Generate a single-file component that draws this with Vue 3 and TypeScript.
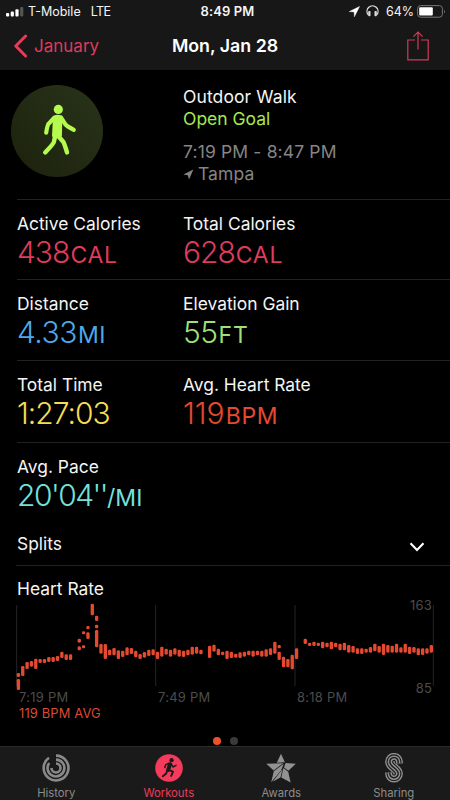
<template>
  <div class="screen">
    <header class="top">
      <div class="status-bar">
        <div class="status-left">
          <svg class="signal" width="18" height="10" viewBox="0 0 18 10">
            <rect x="0" y="6" width="3.2" height="3.6" rx="1" fill="#fff" />
            <rect x="4.7" y="4.4" width="3.2" height="5.2" rx="1" fill="#fff" />
            <rect x="9.4" y="2.3" width="3.2" height="7.3" rx="1" fill="#fff" />
            <rect x="14.1" y="0" width="3.2" height="9.6" rx="1" fill="#555" />
          </svg>
          <span class="carrier">T-Mobile</span>
          <span class="network">LTE</span>
        </div>
        <div class="clock">8:49 PM</div>
        <div class="status-right">
          <svg class="location" width="11" height="11" viewBox="0 0 11 11">
            <path d="M10.6 0.4 L0.2 5.6 L5.1 5.9 L5.4 10.8 Z" fill="#fff" stroke="#fff" stroke-width="0.4" />
          </svg>
          <svg class="headphones" width="13" height="12" viewBox="0 0 13 12">
            <path d="M2.2 9.8 A5.5 5.5 0 1 1 10.8 9.8" fill="none" stroke="#ddd" stroke-width="1.3" />
            <rect x="2.2" y="6" width="2.3" height="5.2" rx="0.8" fill="#ddd" />
            <rect x="8.5" y="6" width="2.3" height="5.2" rx="0.8" fill="#ddd" />
          </svg>
          <span class="percent">64%</span>
          <svg width="29" height="13" viewBox="0 0 29 13">
            <rect x="0.6" y="0.6" width="24.8" height="11.6" rx="3" fill="none" stroke="#777" stroke-width="1" />
            <rect x="2.2" y="2.2" width="13.6" height="8.4" rx="1" fill="#fff" />
            <path d="M27 4.4 Q28.6 6.4 27 8.4 Z" fill="#777" />
          </svg>
        </div>
      </div>
      <nav class="nav-bar">
        <button class="back">
          <svg width="14" height="24" viewBox="0 0 14 24">
            <path d="M11.6 2 L1.8 12 L11.6 22" fill="none" stroke="#e93a5b" stroke-width="3" stroke-linecap="round" stroke-linejoin="round" />
          </svg>
          <span>January</span>
        </button>
        <h1 class="title">Mon, Jan 28</h1>
        <button class="share">
          <svg width="22" height="30" viewBox="0 0 22 30">
            <path d="M8 9 H0.8 V28.8 H21.2 V9 H14 M11 18.5 V1.2 M6.4 5.6 L11 1 L15.6 5.6" fill="none" stroke="#d33a58" stroke-width="1.2" />
          </svg>
        </button>
      </nav>
    </header>

    <main class="content">
      <section class="summary">
        <div class="badge-cell">
          <svg width="92" height="92" viewBox="0 0 92 92">
            <defs>
              <linearGradient id="badge" x1="0" y1="1" x2="1" y2="0">
                <stop offset="0" stop-color="#1c220c" />
                <stop offset="1" stop-color="#29331a" />
              </linearGradient>
            </defs>
            <circle cx="46" cy="46" r="46" fill="url(#badge)" />
            <g fill="none" stroke="#b4fb4d" stroke-linecap="round" stroke-linejoin="round">
              <circle cx="47.3" cy="24.4" r="4.6" fill="#b4fb4d" stroke="none" />
              <path d="M43 31.6 Q46.5 30 50.4 31.6 L49.9 50.5 Q46.5 53.5 42 51 Z" fill="#b4fb4d" stroke-width="2" />
              <path d="M43 33 L37.8 38.6 Q36.4 40 35.2 47.6" stroke-width="4.2" />
              <path d="M50.2 32.8 L54.4 39.4 Q56 41.4 62.8 44.8" stroke-width="4.2" />
              <path d="M44.2 51 L42.8 57.2 Q42 59.2 34.2 67.4" stroke-width="4.4" />
              <path d="M47.2 51 L52.4 57 Q53.4 58.6 56 67.4" stroke-width="4.4" />
            </g>
          </svg>
        </div>
        <div class="info">
          <div class="line kind">Outdoor Walk</div>
          <div class="line goal">Open Goal</div>
          <div class="line time">7:19 PM - 8:47 PM</div>
          <div class="line place">
            <svg width="11" height="11" viewBox="0 0 11 11">
              <path d="M10.4 0.6 L0.4 5.4 L4.8 6.2 L6 10.6 Z" fill="#858585" />
            </svg>
            <span>Tampa</span>
          </div>
        </div>
      </section>

      <section v-for="(row, r) in rows" :key="r" class="metrics" :class="'row-' + r">
        <div v-for="m in row" :key="m.label" class="metric">
          <div class="label">{{ m.label }}</div>
          <div class="value" :class="m.tone">
            <span class="number">{{ m.value }}</span><span class="unit">{{ m.unit }}</span>
          </div>
        </div>
      </section>

      <section class="splits">
        <span class="label">Splits</span>
        <svg width="16" height="10" viewBox="0 0 16 10">
          <path d="M1.5 1.2 L8 7.9 L14.5 1.2" fill="none" stroke="#fff" stroke-width="2.1" />
        </svg>
      </section>

      <section class="heart">
        <div class="label">Heart Rate</div>
        <div class="chart">
          <svg width="418" height="90" viewBox="0 30 1254 270">
            <line v-for="x in grid" :key="x" :x1="x" :x2="x" y1="45" y2="288" stroke="#242424" stroke-width="3" />
            <rect
              v-for="(b, i) in bars"
              :key="i"
              :x="b.x - 5"
              :y="b.top"
              width="10"
              :height="b.bottom - b.top"
              rx="4"
              fill="#e5492f"
            />
          </svg>
          <div class="scale">
            <span>163</span>
            <span>85</span>
          </div>
        </div>
        <div class="times">
          <span>7:19 PM</span>
          <span>7:49 PM</span>
          <span>8:18 PM</span>
        </div>
        <div class="average">119 BPM AVG</div>
      </section>

      <div class="pager">
        <i class="dot active"></i>
        <i class="dot"></i>
      </div>
    </main>

    <footer class="tab-bar">
      <button class="tab">
        <svg width="30" height="30" viewBox="0 0 30 30" fill="none" stroke="#8a8a8a" stroke-width="2.6">
          <path d="M15 2.6 A12.4 12.4 0 1 1 8 4.8" />
          <path d="M15 6.6 A8.4 8.4 0 1 1 8.2 10" />
          <path d="M15 10.5 A4.5 4.5 0 1 1 10.5 15" />
        </svg>
        <span>History</span>
      </button>
      <button class="tab active">
        <svg width="30" height="30" viewBox="0 0 30 30">
          <circle cx="15" cy="15" r="13.8" fill="#f43b5c" />
          <circle cx="17.6" cy="7.2" r="2.1" fill="#1a1a1a" />
          <g fill="none" stroke="#1a1a1a" stroke-linecap="round" stroke-linejoin="round">
            <path d="M16 11.2 L14.2 17" stroke-width="4" />
            <path d="M14.8 10.4 L11.8 11.6 L10.8 14.6" stroke-width="1.5" />
            <path d="M17.6 11.4 L19 14 L22 12.4" stroke-width="1.5" />
            <path d="M15 17.2 L19 18.6 L17.2 22.8" stroke-width="1.9" />
            <path d="M13.2 17.6 L12.2 20.4 L8.8 23.2" stroke-width="1.9" />
          </g>
        </svg>
        <span>Workouts</span>
      </button>
      <button class="tab">
        <svg width="30" height="30" viewBox="0 0 30 30" fill="#929292">
          <path d="M15 0.8 L18.8 9.2 L10.8 9.8 Z" />
          <path d="M0.3 10.8 L17.2 10.2 L7.6 17.4 Z" />
          <path d="M19.6 10 L29.8 10.8 L22.4 17.8 L18 14.6 Z" />
          <path d="M17.8 10.8 L15 17.6 L5.2 29.2 L7.8 18.2 Z" />
          <path d="M16.6 16 L14.4 24.6 L6.6 28.8 Z" />
          <path d="M17.4 15 L22.2 18.8 L24.6 29.4 L15.3 24.6 Z" />
        </svg>
        <span>Awards</span>
      </button>
      <button class="tab">
        <svg width="30" height="30" viewBox="0 0 30 30" fill="none">
          <path :d="sCurve" stroke="#8f8f8f" stroke-width="9.4" />
          <path :d="sCurve" stroke="#1a1a1a" stroke-width="6.6" />
          <path :d="sCurve" stroke="#8f8f8f" stroke-width="4.4" />
          <path :d="sCurve" stroke="#1a1a1a" stroke-width="1.4" />
        </svg>
        <span>Sharing</span>
      </button>
    </footer>
  </div>
</template>

<script setup lang="ts">
interface Metric {
  label: string
  value: string
  unit: string
  tone: string
}

interface Bar {
  x: number
  top: number
  bottom: number
}

const rows: Metric[][] = [
  [
    { label: 'Active Calories', value: '438', unit: 'CAL', tone: 'red' },
    { label: 'Total Calories', value: '628', unit: 'CAL', tone: 'red' }
  ],
  [
    { label: 'Distance', value: '4.33', unit: 'MI', tone: 'blue' },
    { label: 'Elevation Gain', value: '55', unit: 'FT', tone: 'green' }
  ],
  [
    { label: 'Total Time', value: '1:27:03', unit: '', tone: 'yellow' },
    { label: 'Avg. Heart Rate', value: '119', unit: 'BPM', tone: 'orange' }
  ],
  [{ label: 'Avg. Pace', value: "20'04''", unit: '/MI', tone: 'cyan' }]
]

const sCurve = 'M19.2 10.4 V8.8 A4.2 4.2 0 1 0 10.8 8.8 C10.8 14 19.2 15.6 19.2 20.6 A4.2 4.2 0 1 1 10.8 20.6 V19.4'

const grid = [2, 419, 837, 1252]

// one entry per time slot, pairs of top/bottom; an empty slot has no reading
const samples: number[][] = [
  [249, 261, 267, 300], [228, 258], [216, 237], [213, 230], [206, 237], [207, 219], [207, 219], [201, 216],
  [201, 216], [198, 213], [185, 204], [193, 210], [193, 210], [], [146, 158, 169, 181], [124, 133, 166, 175],
  [108, 118, 127, 147], [41, 76], [77, 93, 104, 115, 120, 172], [162, 191], [162, 207], [179, 196], [174, 196], [181, 207],
  [182, 201], [172, 196], [174, 192], [182, 202], [192, 207], [186, 203], [179, 198], [178, 196],
  [185, 207], [170, 200], [176, 194], [179, 200], [175, 194], [179, 200], [182, 201], [179, 196],
  [170, 194], [170, 191], [179, 193], [], [167, 204], [164, 185], [176, 196], [185, 195],
  [182, 207], [185, 204], [191, 203], [187, 204], [185, 200], [182, 196], [182, 200], [182, 196],
  [182, 200], [178, 200], [175, 195], [155, 191], [165, 175, 185, 210], [200, 232], [207, 232], [194, 238],
  [175, 207], [], [146, 162], [158, 168], [155, 168], [158, 168], [155, 175], [158, 172],
  [155, 178], [158, 172], [161, 181], [158, 181], [165, 188], [168, 188], [175, 192], [175, 192],
  [176, 188], [171, 188], [161, 184], [168, 188], [161, 195], [165, 188], [167, 188], [161, 188],
  [172, 188], [161, 188], [170, 192], [171, 188], [175, 196], [175, 195], [175, 191], [165, 188]
]

const bars: Bar[] = []
samples.forEach((s, i) => {
  for (let k = 0; k < s.length; k += 2) {
    bars.push({ x: 7.2 + i * 13.04, top: s[k], bottom: s[k + 1] })
  }
})
</script>

<style>
body {
  margin: 0;
  background: #000;
}
</style>

<style scoped>
.screen {
  display: flex;
  flex-direction: column;
  width: 450px;
  height: 800px;
  overflow: hidden;
  background: #000;
  color: #f4f4f4;
  font-family: Inter, "Liberation Sans", sans-serif;
}

button {
  margin: 0;
  padding: 0;
  border: none;
  background: none;
  color: inherit;
  font: inherit;
}

.top {
  height: 70px;
  flex: none;
  background: #171717;
}

.status-bar {
  display: grid;
  grid-template-columns: 1fr auto 1fr;
  align-items: center;
  height: 23px;
  padding: 0 4px 0 6px;
  font-size: 12.5px;
  line-height: 23px;
}

.status-left,
.status-right {
  display: flex;
  align-items: center;
}

.status-right {
  justify-content: flex-end;
}

.carrier {
  margin-left: 4px;
}

.network {
  margin-left: 10px;
  letter-spacing: -0.6px;
}

.clock {
  padding-left: 3px;
  font-size: 13px;
  font-weight: 600;
  letter-spacing: 0.1px;
}

.headphones {
  margin: 0 7px 1px 6px;
}

.percent {
  margin-right: 3px;
}

.nav-bar {
  display: grid;
  grid-template-columns: 1fr auto 1fr;
  align-items: center;
  height: 46px;
  padding: 0 21px 0 14px;
}

.back {
  display: flex;
  align-items: center;
  gap: 6px;
  color: #dc3c5b;
  font-size: 17px;
}

.title {
  margin: 0;
  padding-left: 7px;
  color: #fff;
  font-size: 17.8px;
  font-weight: 600;
  line-height: 20px;
}

.share {
  justify-self: end;
  height: 30px;
}

.content {
  flex: 1;
  display: flex;
  flex-direction: column;
}

.summary {
  display: flex;
  box-sizing: border-box;
  height: 129px;
  padding: 15px 0 0 11px;
}

.badge-cell {
  width: 172px;
}

.info {
  padding-top: 1px;
}

.line {
  height: 22px;
  font-size: 17.5px;
  line-height: 22px;
  letter-spacing: 0.1px;
  white-space: nowrap;
}

.goal {
  color: #a8e84f;
  letter-spacing: 0;
}

.time {
  margin-top: 11px;
  letter-spacing: 0.15px;
}

.time,
.place {
  color: #858585;
}

.place {
  display: flex;
  align-items: center;
  gap: 4px;
}

.metrics {
  display: grid;
  grid-template-columns: 166px 1fr;
  box-sizing: border-box;
  height: 81px;
  margin-left: 17px;
  padding-top: 13px;
  border-top: 1px solid #222;
}

.row-0 {
  height: 80px;
}

.row-2 {
  height: 82px;
}

.label {
  font-size: 17.4px;
  line-height: 22px;
}

.value {
  height: 34px;
  font-size: 30px;
  font-weight: 350;
  line-height: 34px;
  letter-spacing: -1px;
  white-space: nowrap;
}

.unit {
  margin-left: 1px;
  font-size: 23px;
  font-weight: 400;
  letter-spacing: 0.7px;
}

.red { color: #df3b5c; }
.blue { color: #4ea8ea; }
.green { color: #9fdf78; }
.yellow { color: #f5dc53; }
.orange { color: #e5492f; }
.cyan { color: #76e0d8; }

.blue,
.green {
  letter-spacing: -0.5px;
}

.orange {
  letter-spacing: 0;
}

.cyan {
  letter-spacing: -1.5px;
}

.cyan .unit {
  margin-left: 0;
  letter-spacing: 0;
}

.splits {
  display: flex;
  align-items: center;
  justify-content: space-between;
  height: 42px;
  margin-left: 17px;
  padding-right: 25px;
}

.splits svg {
  margin-top: 5px;
}

.heart {
  margin-left: 16px;
  padding-top: 12px;
  border-top: 1px solid #222;
}

.heart .label {
  padding-left: 1px;
}

.chart {
  display: grid;
  height: 90px;
}

.chart > * {
  grid-area: 1 / 1;
}

.scale {
  display: flex;
  flex-direction: column;
  justify-content: space-between;
  width: 416px;
  height: 94px;
  color: #4c4c4c;
  font-size: 13px;
  line-height: 11px;
  letter-spacing: 0.2px;
  text-align: right;
}

.times {
  display: grid;
  grid-template-columns: 139px 139px 1fr;
  padding-left: 3px;
  color: #4c4c4c;
  font-size: 12.9px;
  line-height: 16px;
  letter-spacing: 0.3px;
}

.average {
  padding-left: 3px;
  color: #dc4a31;
  font-size: 12.9px;
  line-height: 15px;
  letter-spacing: 0.15px;
}

.pager {
  display: flex;
  justify-content: center;
  gap: 9px;
  margin-top: auto;
  padding-bottom: 1px;
}

.dot {
  width: 8px;
  height: 8px;
  border-radius: 50%;
  background: #3a3a3a;
}

.dot.active {
  background: #ee5030;
}

.tab-bar {
  display: flex;
  flex: none;
  box-sizing: border-box;
  height: 54px;
  border-top: 1px solid #2b2b2b;
  background: #1a1a1a;
}

.tab {
  display: flex;
  flex: 1;
  flex-direction: column;
  align-items: center;
  padding-top: 6px;
  color: #8c8c8c;
  font-size: 11.3px;
  line-height: 21px;
}

.tab svg {
  flex: none;
}

.tab.active {
  color: #ee3a5b;
}
</style>
